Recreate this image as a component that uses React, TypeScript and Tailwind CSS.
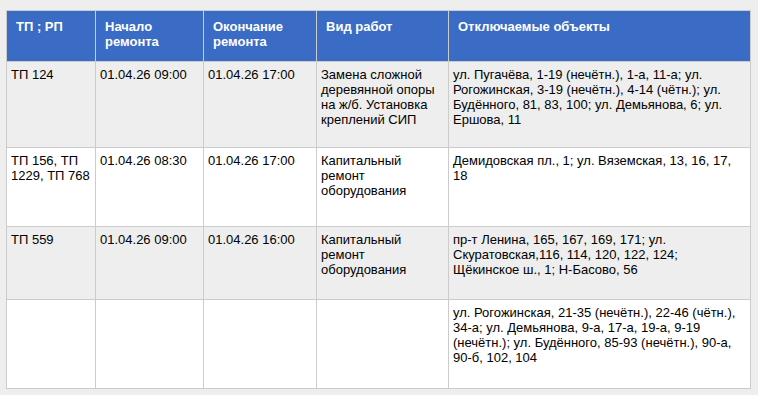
type Row = {
  cells: string[][];
  h: string;
  bg: string;
};

const rows: Row[] = [
  {
    cells: [
      ["ТП 124"],
      ["01.04.26 09:00"],
      ["01.04.26 17:00"],
      ["Замена сложной", "деревянной опоры", "на ж/б. Установка", "креплений СИП"],
      [
        "ул. Пугачёва, 1-19 (нечётн.), 1-а, 11-а; ул.",
        "Рогожинская, 3-19 (нечётн.), 4-14 (чётн.); ул.",
        "Будённого, 81, 83, 100; ул. Демьянова, 6; ул.",
        "Ершова, 11",
      ],
    ],
    h: "h-[85px]",
    bg: "bg-[#eeeeee]",
  },
  {
    cells: [
      ["ТП 156, ТП", "1229, ТП 768"],
      ["01.04.26 08:30"],
      ["01.04.26 17:00"],
      ["Капитальный", "ремонт", "оборудования"],
      ["Демидовская пл., 1; ул. Вяземская, 13, 16, 17,", "18"],
    ],
    h: "h-[79px]",
    bg: "bg-white",
  },
  {
    cells: [
      ["ТП 559"],
      ["01.04.26 09:00"],
      ["01.04.26 16:00"],
      ["Капитальный", "ремонт", "оборудования"],
      [
        "пр-т Ленина, 165, 167, 169, 171; ул.",
        "Скуратовская,116, 114, 120, 122, 124;",
        "Щёкинское ш., 1; Н-Басово, 56",
      ],
    ],
    h: "h-[73px]",
    bg: "bg-[#eeeeee]",
  },
  {
    cells: [
      [],
      [],
      [],
      [],
      [
        "ул. Рогожинская, 21-35 (нечётн.), 22-46 (чётн.),",
        "34-а; ул. Демьянова, 9-а, 17-а, 19-а, 9-19",
        "(нечётн.); ул. Будённого, 85-93 (нечётн.), 90-а,",
        "90-б, 102, 104",
      ],
    ],
    h: "h-[89px]",
    bg: "bg-white",
  },
];

const headers = [
  ["ТП ; РП"],
  ["Начало", "ремонта"],
  ["Окончание", "ремонта"],
  ["Вид работ"],
  ["Отключаемые объекты"],
];

function Lines({ lines }: { lines: string[] }) {
  return (
    <>
      {lines.map((l) => (
        <span key={l} className="block whitespace-nowrap">
          {l}
        </span>
      ))}
    </>
  );
}

export default function App() {
  return (
    <div className="min-h-[395px] bg-[#eeeeee] pl-[6px] pt-[10px] font-['Liberation_Sans',Arial,sans-serif] text-[13px] leading-[15px] text-black">
      <table className="w-[744px] table-fixed border-collapse">
        <colgroup>
          <col className="w-[89px]" />
          <col className="w-[108px]" />
          <col className="w-[113px]" />
          <col className="w-[132px]" />
          <col className="w-[302px]" />
        </colgroup>
        <thead>
          <tr className="h-[51px] bg-[#3a6bc5]">
            {headers.map((h, i) => (
              <th
                key={i}
                className="border border-[#cccccc] pt-[8px] pb-[12px] pl-[9px] pr-[4px] text-left align-top font-bold text-white"
              >
                <Lines lines={h} />
              </th>
            ))}
          </tr>
        </thead>
        <tbody>
          {rows.map((r, i) => (
            <tr key={i} className={`${r.h} ${r.bg}`}>
              {r.cells.map((c, j) => (
                <td
                  key={j}
                  className="border border-[#cccccc] pt-[5px] pb-[20px] pl-[4px] pr-[4px] align-top"
                >
                  <Lines lines={c} />
                </td>
              ))}
            </tr>
          ))}
        </tbody>
      </table>
    </div>
  );
}
